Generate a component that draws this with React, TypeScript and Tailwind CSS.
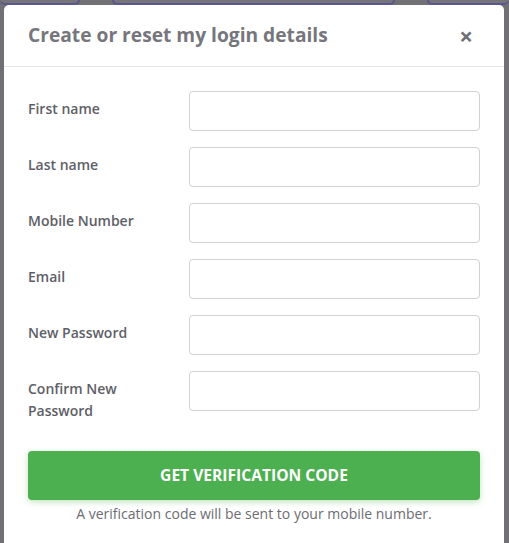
import React from 'react'

const fields = [
  { id: 'first', label: 'First name', type: 'text' },
  { id: 'last', label: 'Last name', type: 'text' },
  { id: 'mobile', label: 'Mobile Number', type: 'tel' },
  { id: 'email', label: 'Email', type: 'email' },
  { id: 'password', label: 'New Password', type: 'password' },
  { id: 'confirm', label: 'Confirm New Password', type: 'password' },
]

export default function App() {
  return (
    <div className="relative min-h-[543px] w-full overflow-hidden bg-[#707075] font-['Open_Sans',sans-serif]">
      {/* dimmed page behind the modal */}
      <div className="flex h-[5px] gap-8">
        <div className="h-full w-[80px] rounded-b-md border-b-2 border-r-2 border-[#5a5690] bg-[#747479]" />
        <div className="h-full w-[283px] rounded-b-md border-x-2 border-b-2 border-[#5a5690] bg-[#747479]" />
        <div className="h-full flex-1 rounded-b-md border-b-2 border-l-2 border-[#5a5690] bg-[#747479]" />
      </div>

      <div className="mx-[4px] w-[500px] rounded-t-[5px] bg-white">
        {/* Header */}
        <div className="flex h-[62px] items-center justify-between border-b border-[#e3e3e8] pl-[24px] pr-[31px]">
          <h2 className="text-[19.2px] font-bold text-[#76767c]">Create or reset my login details</h2>
          <button className="text-[24px] font-bold leading-none text-[#6f6f75]">×</button>
        </div>

        {/* Body */}
        <form className="px-[24px] pt-[24px] pb-[30px]" onSubmit={(e) => e.preventDefault()}>
          <div className="flex flex-col gap-[16px]">
            {fields.map((f) => (
              <div key={f.id} className="flex h-[40px]">
                <label
                  htmlFor={f.id}
                  className="w-[161px] shrink-0 pr-[15px] pt-[7px] text-[14px] font-semibold leading-[22px] text-[#5e5e66]"
                >
                  {f.label}
                </label>
                <input
                  id={f.id}
                  type={f.type}
                  className="h-[40px] flex-1 rounded-[4px] border border-[#d2d2d2] bg-white px-3 text-[14px] outline-none"
                />
              </div>
            ))}
          </div>

          <button
            type="submit"
            className="mt-[40px] h-[49px] w-full rounded-[4px] bg-[#4caf50] text-[15.6px] font-bold text-white shadow-[0_2px_6px_rgba(76,175,80,0.35)]"
          >
            GET VERIFICATION CODE
          </button>
          <p className="mt-[4px] text-center text-[14px] leading-[20px] text-[#6c6c73]">
            A verification code will be sent to your mobile number.
          </p>
        </form>
      </div>
    </div>
  )
}
